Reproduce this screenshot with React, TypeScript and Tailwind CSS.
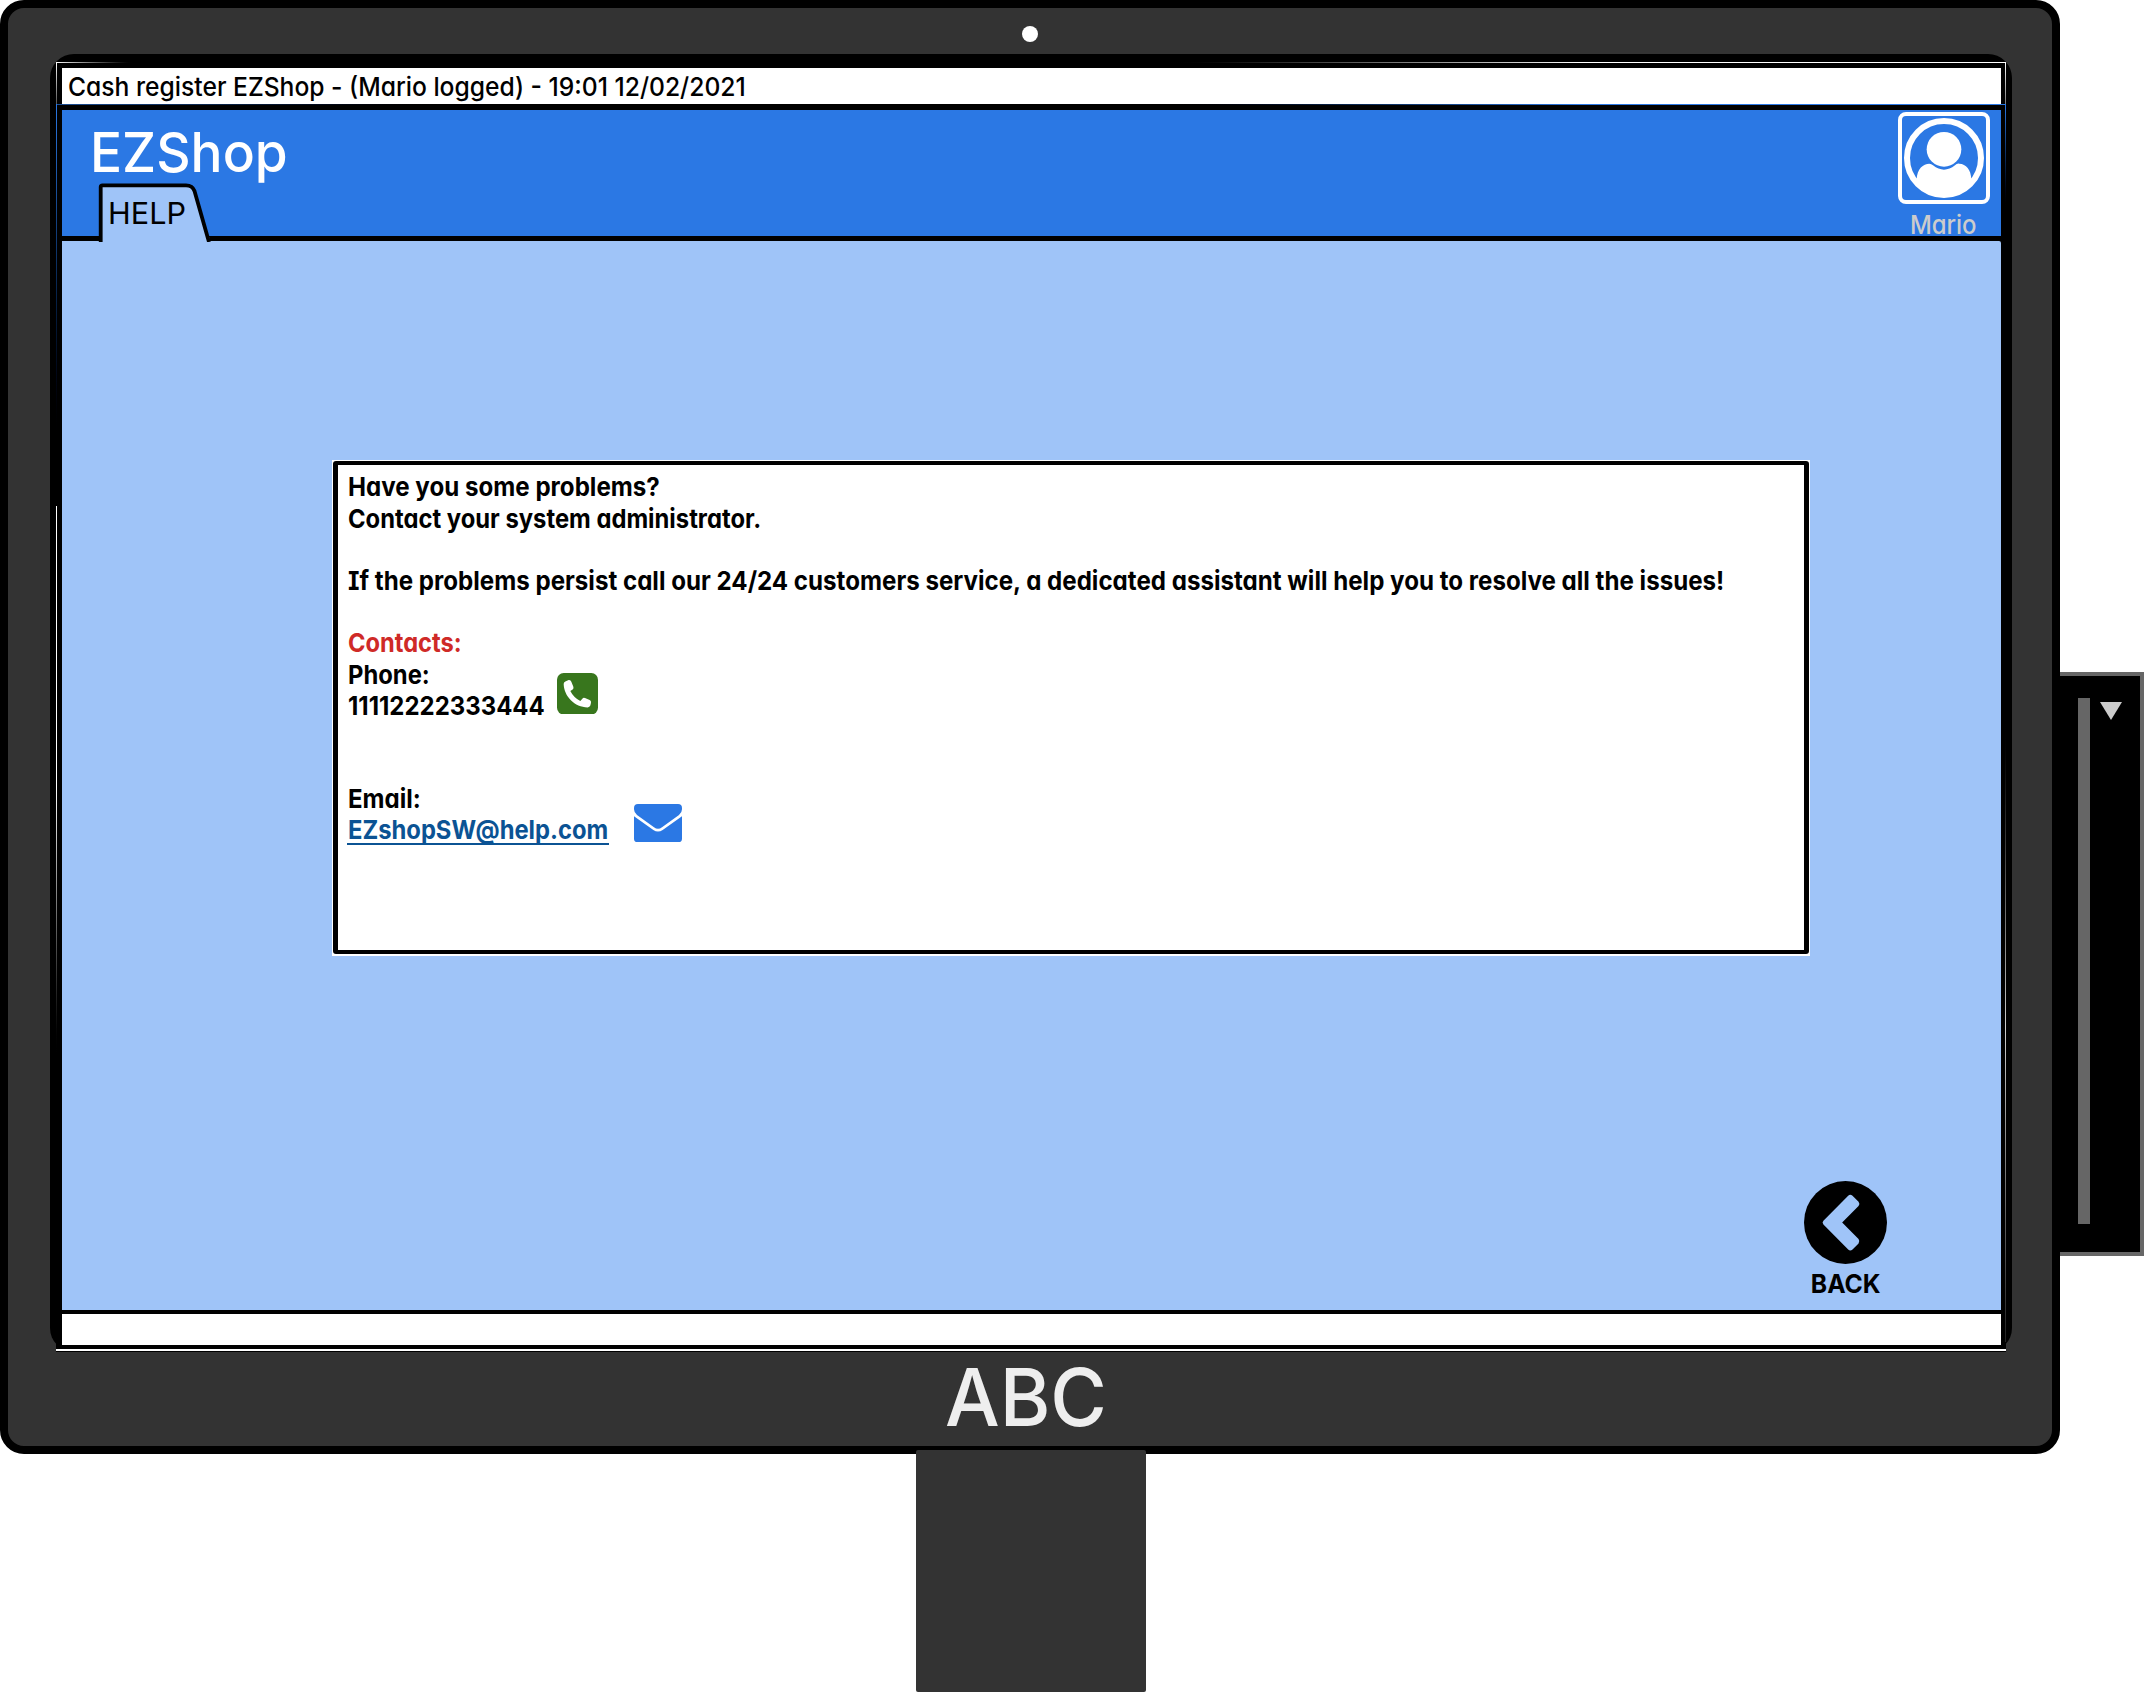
const UserIcon = () => (
  <svg viewBox="0 0 276 276" className="block h-[92px] w-[92px] shrink-0">
    <rect x="6" y="6" width="264" height="264" rx="18" fill="none" stroke="#fff" strokeWidth="12" />
    <circle cx="138" cy="138" r="111" fill="none" stroke="#fff" strokeWidth="18" />
    <circle cx="138" cy="112" r="52" fill="#fff" />
    <path
      d="M56 202C57 170 76 155 94 155Q100 155 105 160Q138 186 171 160Q176 154 184 155C204 156 219 172 220 202L215 218A111 111 0 0 1 61 218Z"
      fill="#fff"
    />
  </svg>
);

const PhoneIcon = () => (
  <svg viewBox="0 0 123 124" className="block h-[41.5px] w-[41px]">
    <rect width="123" height="124" rx="20" fill="#38761d" />
    <path
      d="M25 25L35 21Q41 20 43 26L49 41Q51 46 47 49L40 54Q50 74 70 84L76 77Q79 73 84 75L98 81Q103 83 102 89L100 97Q98 102 92 103C53 103 21 70 20 33Q20 27 25 25Z"
      fill="#fff"
    />
  </svg>
);

const MailIcon = () => (
  <svg viewBox="0 0 144 114" className="block h-[38px] w-[48px]">
    <path
      d="M0 12Q0 0 12 0H132Q144 0 144 12V16Q144 26 135 33L84 70Q72 79 60 70L9 33Q0 26 0 16Z"
      fill="#2b78e4"
    />
    <path d="M0 37L58 78Q72 87 86 78L144 37V104Q144 114 134 114H10Q0 114 0 104Z" fill="#2b78e4" />
  </svg>
);

const BackIcon = () => (
  <svg viewBox="0 0 248 248" className="block h-[83px] w-[83px]">
    <circle cx="124" cy="124" r="124" fill="#000" />
    <path
      d="M58 119L132 44Q138 38 145 44L163 62Q168 68 163 75L114 124L163 173Q168 180 163 187L145 205Q138 211 132 205L58 130Q53 124 58 119Z"
      fill="#9fc4f8"
    />
  </svg>
);

const HelpTab = () => (
  <div className="absolute left-[41px] top-[120px] h-[60px] w-[114px]">
    <svg viewBox="0 0 114 60" className="absolute inset-0 h-full w-full">
      <path d="M3.5 58V4.5Q3.5 3 5.5 3H90Q95.5 3 97.5 9L113 58V60H3.5Z" fill="#9fc4f8" />
      <path d="M3.7 60V5Q3.7 3.3 5.5 3.3H89Q95.5 3.3 97.5 9L112 60" fill="none" stroke="#000" strokeWidth="3.8" />
    </svg>
    <span className="absolute left-[11px] top-[13px] inline-block origin-left scale-x-[1.02] text-[30px] leading-[36px]">
      HELP
    </span>
  </div>
);

const Line = ({ text = "", scale = "scale-x-[0.925]" }: { text?: string; scale?: string }) => (
  <div className="h-[31.25px]">
    <span className={`inline-block origin-left whitespace-nowrap ${scale}`}>{text}</span>
  </div>
);

const InfoPanel = () => (
  <section className="h-[496px] w-[1478px] bg-white px-[1px] pb-[2px] pt-[1px]">
    <div className="h-full w-full rounded-[3px] border-[5px] border-b-4 border-t-4 border-black pl-[10px] pt-[6px] text-[26px] font-bold leading-[31.25px]">
      <Line text="Have you some problems?" scale="scale-x-[0.928]" />
      <div className="relative top-px">
        <Line text="Contact your system administrator." scale="scale-x-[0.915]" />
      </div>
      <Line />
      <Line
        text="If the problems persist call our 24/24 customers service, a dedicated assistant will help you to resolve all the issues!"
        scale="scale-x-[0.928]"
      />
      <Line />
      <div className="text-[#cf2a27]">
        <Line text="Contacts:" scale="scale-x-[0.91]" />
      </div>
      <div className="flex">
        <div className="w-[209px]">
          <Line text="Phone:" scale="scale-x-[0.915]" />
          <Line text="11112222333444" scale="scale-x-[0.922]" />
        </div>
        <div className="pt-[14px]">
          <PhoneIcon />
        </div>
      </div>
      <Line />
      <Line />
      <div className="-mt-px flex">
        <div className="w-[286px]">
          <Line text="Email:" scale="scale-x-[0.925]" />
          <div className="-ml-px h-[31px] w-[262px] border-b-2 border-[#0b5394] pl-px text-[#0b5394]">
            <Line text="EZshopSW@help.com" scale="scale-x-[0.914]" />
          </div>
        </div>
        <div className="pt-[21px]">
          <MailIcon />
        </div>
      </div>
    </div>
  </section>
);

const EdgeHighlights = () => (
  <>
    <div className="absolute left-0 top-0 h-px w-[80px] bg-gradient-to-r from-white to-black" />
    <div className="absolute right-0 top-0 h-px w-[850px] bg-gradient-to-l from-white from-50% to-black" />
    <div className="absolute left-0 top-0 h-[42px] w-px bg-gradient-to-b from-white to-[#555]" />
    <div className="absolute right-0 top-0 h-[42px] w-px bg-gradient-to-b from-white to-[#777]" />
    <div className="absolute left-0 top-[42px] h-px w-[400px] bg-gradient-to-r from-[#1c4f96] to-black" />
    <div className="absolute right-0 top-[42px] h-px w-[850px] bg-gradient-to-l from-[#2b78e4] from-50% to-black" />
    <div className="absolute left-0 top-[42px] h-[350px] w-px bg-gradient-to-b from-[#2b78e4] to-black" />
    <div className="absolute right-0 top-[42px] h-[110px] w-px bg-gradient-to-b from-[#2b78e4] to-black" />
    <div className="absolute left-0 top-[444px] h-[560px] w-px bg-gradient-to-b from-white from-50% to-black" />
    <div className="absolute right-0 top-[650px] h-[630px] w-px bg-gradient-to-b from-black via-[#ccc] to-[#222]" />
  </>
);

const Browser = () => (
  <div className="relative ml-[6px] mt-[8px] flex h-[1290px] w-[1950px] flex-col bg-black">
    <div className="ml-[6px] mr-[5px] mt-[6px] h-[36px] bg-white pl-[6px] text-[26px] font-medium leading-[38px]">
      <span className="inline-block origin-left whitespace-nowrap scale-x-[0.948]">
        Cash register EZShop - (Mario logged) - 19:01 12/02/2021
      </span>
    </div>
    <header className="ml-[6px] mr-[5px] mt-[6px] flex h-[126px] justify-between bg-[#2b78e4]">
      <h1 className="ml-[28px] mt-[9px] origin-left scale-x-[0.968] text-[55px] font-medium leading-[66px] text-white">
        EZShop
      </h1>
      <div className="mr-[11px] flex flex-col items-center pt-[2px]">
        <UserIcon />
        <span className="mr-px mt-[5px] scale-x-[0.92] text-[26px] font-medium leading-[32px] text-[#ccc]">Mario</span>
      </div>
    </header>
    <HelpTab />
    <main className="ml-[6px] mr-[5px] mt-[5px] h-[1069px] rounded-tr-[2px] bg-[#9fc4f8]">
      <div className="pl-[270px] pt-[219px]">
        <InfoPanel />
      </div>
      <div className="mr-[114px] mt-[225px] flex flex-col items-end">
        <div className="flex flex-col items-center">
          <BackIcon />
          <span className="mt-[4px] scale-x-[0.95] text-[26px] font-bold leading-[32px]">BACK</span>
        </div>
      </div>
    </main>
    <footer className="ml-[6px] mr-[5px] mt-[4px] h-[31px] bg-white" />
    <div className="mt-[4px] h-[2px] bg-white" />
    <EdgeHighlights />
  </div>
);

const SideDevice = () => (
  <div className="mt-[672px] flex h-[584px] w-[84px] border-y-4 border-r-4 border-[#666] bg-black pl-[18px]">
    <div className="mt-[22px] h-[526px] w-[12px] bg-[#666]" />
    <svg viewBox="0 0 22 18" className="ml-[10px] mt-[26px] h-[18px] w-[22px]">
      <path d="M0 0H22L11 18Z" fill="#ccc" />
    </svg>
  </div>
);

export default function App() {
  return (
    <div className="h-[1692px] w-[2144px] overflow-hidden bg-white font-['Inter',sans-serif] text-black [font-feature-settings:'cv11','cv08']">
      <div className="flex h-[1454px]">
        <div className="flex h-[1454px] w-[2060px] flex-col rounded-[24px] border-8 border-black bg-[#333]">
          <div className="flex h-[46px] justify-center pt-[18px]">
            <div className="h-4 w-4 rounded-full bg-white" />
          </div>
          <div className="ml-[42px] h-[1298px] w-[1962px] rounded-t-[24px] rounded-b-[24px] bg-black">
            <Browser />
          </div>
          <div className="-ml-[9px] -mt-px flex justify-center">
            <span className="scale-x-[0.965] text-[80px] font-medium leading-[92px] text-[#eee]">ABC</span>
          </div>
        </div>
        <SideDevice />
      </div>
      <div className="relative -mt-[4px] ml-[916px] h-[242px] w-[230px] rounded-[2px] bg-[#333]" />
    </div>
  );
}
